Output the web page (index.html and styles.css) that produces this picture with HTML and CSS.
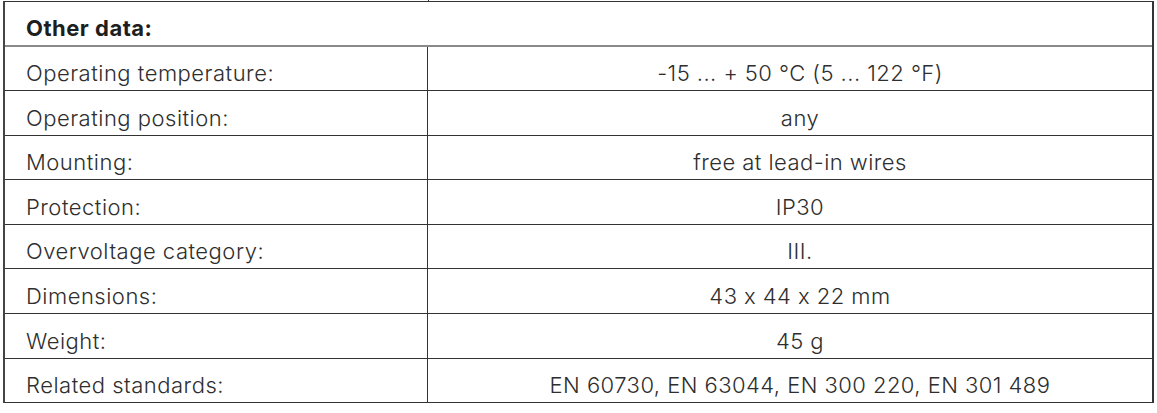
FILE: index.html
```html
<!DOCTYPE html>
<html lang="en">
<head>
<meta charset="utf-8">
<title>Other data</title>
<link rel="stylesheet" href="styles.css">
</head>
<body>
<div class="wrap">
  <div class="stub"><div class="stub-left"></div></div>
  <div class="table">
    <div class="row head"><div class="label">Other data:</div></div>
    <div class="row"><div class="label">Operating temperature:</div><div class="value">-15 ... + 50 °C (5 ... 122 °F)</div></div>
    <div class="row"><div class="label">Operating position:</div><div class="value">any</div></div>
    <div class="row"><div class="label">Mounting:</div><div class="value">free at lead-in wires</div></div>
    <div class="row"><div class="label">Protection:</div><div class="value">IP30</div></div>
    <div class="row"><div class="label">Overvoltage category:</div><div class="value">III.</div></div>
    <div class="row"><div class="label">Dimensions:</div><div class="value">43 x 44 x 22 mm</div></div>
    <div class="row"><div class="label">Weight:</div><div class="value">45 g</div></div>
    <div class="row last"><div class="label">Related standards:</div><div class="value">EN 60730, EN 63044, EN 300 220, EN 301 489</div></div>
  </div>
</div>
</body>
</html>
```
FILE: styles.css
```css
html, body {
  margin: 0;
  padding: 0;
  background: #ffffff;
}
body {
  font-family: Inter, "Liberation Sans", sans-serif;
  font-weight: 300;
  font-size: 22px;
  letter-spacing: 0.5px;
  font-feature-settings: "calt" 0;
  color: #2e2e2e;
}
.wrap {
  padding: 0 3px;
  width: 1151px;
}
.stub {
  height: 1px;
  display: flex;
}
.stub-left {
  width: 425px;
  height: 1px;
  border-right: 1px solid #333;
}
.table {
  border-top: 1px solid #333;
  border-left: 2px solid #444;
  border-right: 2px solid #333;
  box-sizing: border-box;
}
.row {
  display: grid;
  grid-template-columns: 423px 1fr;
  height: 44.6px;
  box-sizing: border-box;
  border-bottom: 1px solid #333;
}
.row.head {
  display: flex;
  height: 44.5px;
  border-bottom: 2px solid #8a8a8a;
}
.label, .value {
  display: flex;
  align-items: flex-end;
  padding-bottom: 6px;
  line-height: 22px;
  box-sizing: border-box;
  white-space: nowrap;
}
.label {
  padding-left: 21px;
  border-right: 1px solid #333;
}
.head .label {
  border-right: none;
  font-weight: 700;
  color: #1e1e1e;
  padding-bottom: 5.5px;
}
.value {
  justify-content: center;
  padding-left: 20px;
  letter-spacing: 0.45px;
}
```
